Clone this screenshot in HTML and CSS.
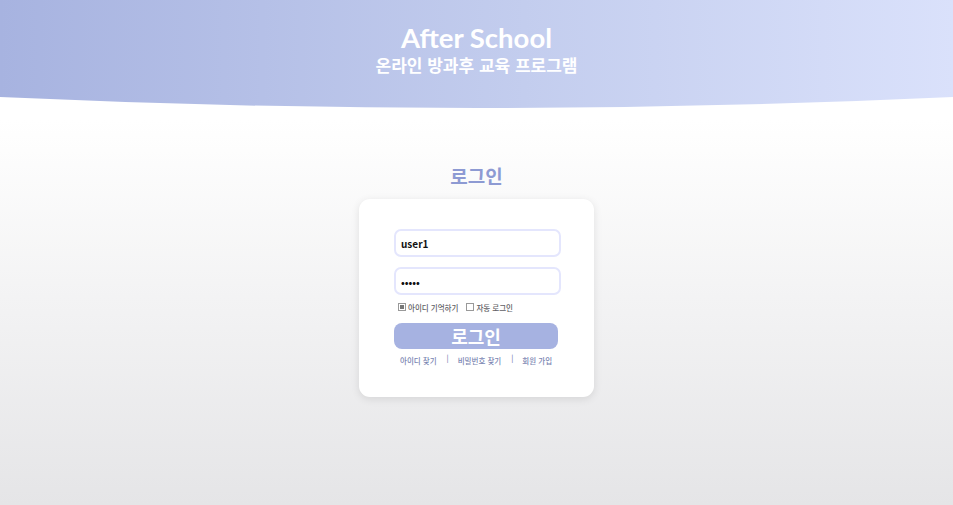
FILE: index.html
```html
<!DOCTYPE html>
<html lang="ko">
<head>
<meta charset="utf-8">
<title>After School 로그인</title>
<link rel="stylesheet" href="styles.css">
</head>
<body>
<header class="hero">
  <h1 class="hero-title">After School</h1>
  <p class="hero-sub">온라인 방과후 교육 프로그램</p>
</header>
<main class="main">
  <h2 class="login-title">로그인</h2>
  <form class="card">
    <input class="field" type="text" value="user1">
    <input class="field" type="password" value="abcde">
    <div class="options">
      <label class="opt"><span class="box box-on"></span>아이디 기억하기</label>
      <label class="opt"><span class="box"></span>자동 로그인</label>
    </div>
    <button class="btn" type="button">로그인</button>
    <div class="links">
      <a class="link">아이디 찾기</a>
      <span class="sep">|</span>
      <a class="link">비밀번호 찾기</a>
      <span class="sep">|</span>
      <a class="link">회원 가입</a>
    </div>
  </form>
</main>
</body>
</html>
```
FILE: styles.css
```css
html { height: 100%; }
body {
  margin: 0;
  min-height: 100%;
  font-family: "Noto Sans CJK KR", "Noto Sans", sans-serif;
  background: linear-gradient(180deg, #ffffff 0px, #ffffff 120px, #e5e5e7 505px);
}
.hero {
  height: 110px;
  display: flex;
  flex-direction: column;
  align-items: center;
  background: linear-gradient(90deg, #a7b3e0 0%, #c3cdee 55%, #dae1fb 100%);
  clip-path: path('M0 0 H953 V97 Q476.5 119 0 97 Z');
  color: #fff;
}
.hero-title {
  margin: 22px 0 0;
  font-family: Lato, "Noto Sans CJK KR", sans-serif;
  font-size: 27.5px;
  line-height: 32px;
  font-weight: 700;
}
.hero-sub {
  margin: 0;
  font-size: 17px;
  line-height: 22px;
  font-weight: 700;
}
.main {
  display: flex;
  flex-direction: column;
  align-items: center;
}
.login-title {
  margin: 53px 0 0;
  font-size: 19px;
  line-height: 26px;
  font-weight: 700;
  color: #8d9ad3;
}
.card {
  margin-top: 10px;
  width: 235px;
  box-sizing: border-box;
  padding: 30px 33px 29px 35px;
  background: #fff;
  border-radius: 11px;
  box-shadow: 0 2px 8px rgba(0,0,0,0.10);
  display: flex;
  flex-direction: column;
}
.field {
  width: 167px;
  height: 28px;
  box-sizing: border-box;
  border: 2px solid #e4e6fd;
  border-radius: 7px;
  padding: 0 5px;
  font-family: "Noto Sans CJK KR", sans-serif;
  font-size: 10px;
  font-weight: 700;
  color: #111;
  outline: none;
}
.field + .field { margin-top: 10px; }
.options {
  display: flex;
  gap: 8px;
  margin: 6px 0 0 4px;
  height: 12px;
  align-items: center;
}
.opt {
  display: flex;
  align-items: center;
  gap: 2px;
  font-size: 7.5px;
  font-weight: 500;
  color: #5f5f66;
  white-space: nowrap;
}
.box {
  width: 6px;
  height: 6px;
  border: 1px solid #999;
  background: #fff;
  display: inline-block;
  position: relative;
}
.box-on::after {
  content: "";
  position: absolute;
  left: 1px; top: 1px;
  width: 4px; height: 4px;
  background: #777;
}
.btn {
  margin-top: 10px;
  width: 164px;
  height: 26px;
  border: none;
  border-radius: 8px;
  background: #a6b2e1;
  color: #fff;
  font-family: "Noto Sans CJK KR", sans-serif;
  font-size: 18px;
  font-weight: 700;
  line-height: 26px;
  padding: 0;
}
.links {
  display: flex;
  margin: 5px 0 0 6px;
  font-size: 7.5px;
  font-weight: 500;
  line-height: 14px;
  white-space: nowrap;
}
.link { color: #7a86b2; }
.sep { margin: -3px 9px 0 10px; color: #7a86b2; }
```
